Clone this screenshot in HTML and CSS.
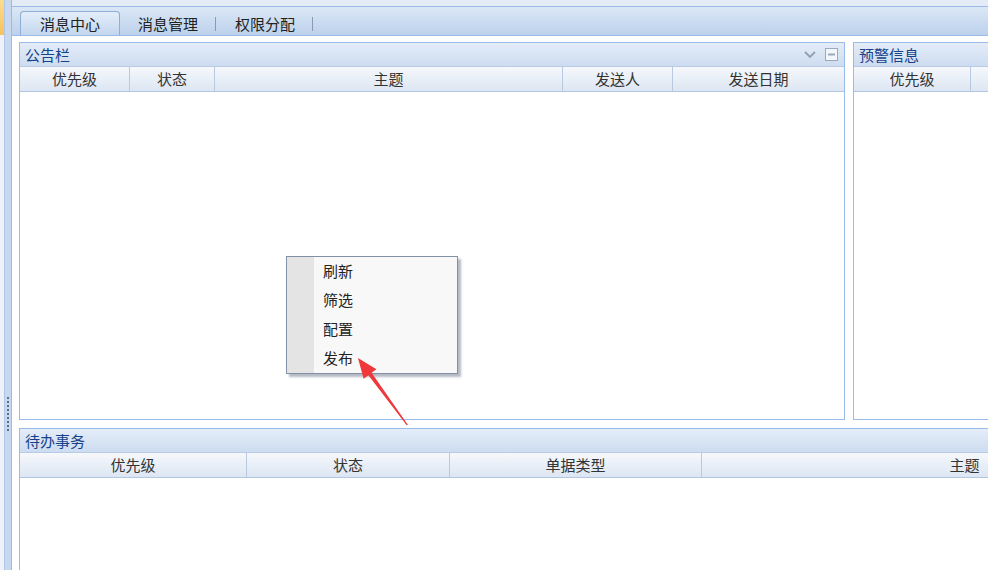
FILE: index.html
```html
<!DOCTYPE html>
<html lang="zh">
<head>
<meta charset="utf-8">
<link rel="stylesheet" href="styles.css">
</head>
<body>
<div class="app">
  <div class="side"><div class="side-top"></div></div>
  <div class="splitter"><div class="dots"></div></div>
  <div class="main">
    <div class="tabbar">
      <div class="tab active">消息中心</div>
      <div class="tab">消息管理</div>
      <div class="sep"></div>
      <div class="tab">权限分配</div>
      <div class="sep"></div>
    </div>
    <div class="content">
      <div class="panel notice">
        <div class="ph">
          <span class="ptitle">公告栏</span>
          <span class="tools">
            <svg width="14" height="10" viewBox="0 0 14 10"><path d="M2 2 L7 7 L12 2" fill="none" stroke="#8fa0b5" stroke-width="1.8"/></svg>
            <svg width="13" height="13" viewBox="0 0 13 13"><rect x="0.5" y="0.5" width="12" height="12" fill="#f3f6fa" stroke="#9aa9bb"/><rect x="3" y="5.5" width="7" height="2" fill="#9aa9bb"/></svg>
          </span>
        </div>
        <div class="cols">
          <div class="col" style="width:110px">优先级</div>
          <div class="col" style="width:85px">状态</div>
          <div class="col" style="width:348px">主题</div>
          <div class="col" style="width:110px">发送人</div>
          <div class="col last" style="width:171px">发送日期</div>
        </div>
      </div>
      <div class="panel warn">
        <div class="ph"><span class="ptitle">预警信息</span></div>
        <div class="cols">
          <div class="col" style="width:117px">优先级</div>
          <div class="col" style="width:120px"></div>
        </div>
      </div>
      <div class="panel todo">
        <div class="ph"><span class="ptitle">待办事务</span></div>
        <div class="cols">
          <div class="col" style="width:227px">优先级</div>
          <div class="col" style="width:203px">状态</div>
          <div class="col" style="width:252px">单据类型</div>
          <div class="col" style="width:526px">主题</div>
        </div>
      </div>
    </div>
  </div>
</div>

<div class="menu">
  <div class="mi">刷新</div>
  <div class="mi">筛选</div>
  <div class="mi">配置</div>
  <div class="mi">发布</div>
</div>

<svg class="arrow" width="988" height="570" viewBox="0 0 988 570">
  <polygon points="358,358 376.4,369.2 371.6,372.8 408,425 406.5,425 368.4,375.2 363.6,378.8" fill="#f0373a"/>
</svg>
</body>
</html>
```
FILE: styles.css
```css
* { box-sizing: border-box; }
html, body {
  margin: 0;
  width: 988px;
  height: 570px;
  overflow: hidden;
  background: #dfe8f5;
  font-family: "Noto Sans CJK SC", "Noto Sans", sans-serif;
  font-size: 15px;
  color: #333;
}
.app {
  display: flex;
  height: 570px;
}
.side {
  width: 4px;
  flex: none;
  background: #eef2f8;
}
.side-top {
  height: 35px;
  background: linear-gradient(#fbdc8e, #f6c35f);
}
.splitter {
  width: 8px;
  flex: none;
  background: #c8d8ee;
  border-left: 1px solid #b0c6e4;
  border-right: 1px solid #99bbe8;
  display: flex;
  justify-content: center;
}
.dots {
  margin-top: 397px;
  width: 2px;
  height: 34px;
  background: repeating-linear-gradient(#5d6f88 0 2px, transparent 2px 4px);
}
.main {
  flex: 1;
  min-width: 0;
  display: flex;
  flex-direction: column;
  padding-top: 6px;
  background: #e3ebf6;
}
.tabbar {
  height: 30px;
  flex: none;
  display: flex;
  align-items: flex-end;
  padding-left: 8px;
  border-top: 1px solid #99bbe8;
  border-bottom: 1px solid #99bbe8;
  background: linear-gradient(#dbe7f6, #bcd1eb);
}
.tab {
  height: 24px;
  line-height: 26px;
  padding: 0 17px 0 18px;
  color: #222;
  white-space: nowrap;
}
.tab.active {
  width: 100px;
  padding: 0;
  text-align: center;
  line-height: 24px;
  border: 1px solid #8eaed8;
  border-bottom: none;
  border-radius: 4px 4px 0 0;
  background: linear-gradient(#e4eefa, #c3d6ee);
}
.sep {
  width: 1px;
  height: 14px;
  margin-bottom: 4px;
  background: #8a99ad;
}
.tab + .sep + .tab { padding-left: 19px; }
.content {
  flex: 1;
  background: #fff;
  padding: 6px 0 0 7px;
  display: grid;
  grid-template-columns: 826px 300px;
  grid-template-rows: 378px 200px;
  gap: 8px;
}
.panel {
  border: 1px solid #99bbe8;
  background: #fff;
  overflow: hidden;
}
.todo {
  grid-column: 1 / 3;
  width: 1300px;
}
.ph {
  height: 24px;
  display: flex;
  align-items: center;
  justify-content: space-between;
  padding: 0 6px 0 5px;
  background: linear-gradient(#e4edf8, #cddcf0);
  border-bottom: 1px solid #b8cbe6;
}
.ptitle {
  color: #15428b;
  white-space: nowrap;
}
.tools {
  display: flex;
  align-items: center;
  gap: 8px;
}
.cols {
  display: flex;
  height: 25px;
  border-bottom: 1px solid #b3c7e2;
  background: linear-gradient(#f6f8fc, #dce6f2);
}
.col {
  flex: none;
  height: 24px;
  line-height: 24px;
  text-align: center;
  border-right: 1px solid #b8cae2;
  white-space: nowrap;
}
.col.last { border-right: none; }
.menu {
  position: absolute;
  left: 286px;
  top: 256px;
  width: 172px;
  height: 118px;
  border: 1px solid #8391a6;
  background: linear-gradient(to right, #e4e4e4 27px, #f8f8f8 27px);
  box-shadow: 3px 3px 2px rgba(120, 130, 150, 0.55);
}
.mi {
  height: 29px;
  line-height: 27px;
  padding-left: 36px;
  color: #222;
}
.arrow {
  position: absolute;
  left: 0;
  top: 0;
  pointer-events: none;
}
```
